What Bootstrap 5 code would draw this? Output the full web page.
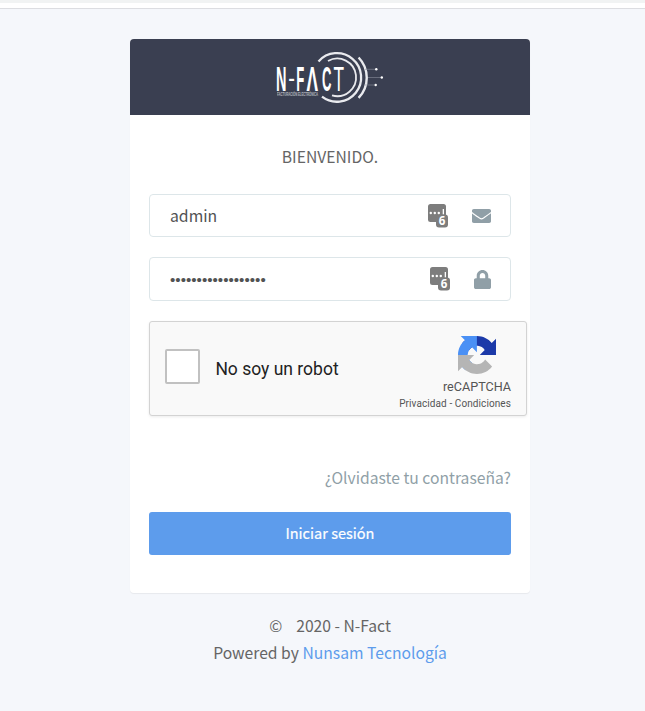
<!DOCTYPE html>
<html lang="es">
<head>
    <meta charset="UTF-8">
    <meta name="viewport" content="width=device-width, initial-scale=1.0">
    <title>N-Fact</title>
    <link href="https://cdn.jsdelivr.net/npm/bootstrap@5.3.0/dist/css/bootstrap.min.css" rel="stylesheet">
    <style>
        body {
            background: #f5f7fb;
            color: #656565;
            font-family: "Noto Sans CJK SC", "Open Sans", sans-serif;
            font-size: 15.68px;
            line-height: 27px;
        }
        .top-strip { height: 9px; background: #fff; border-top: 3px solid #f1f3f3; border-bottom: 1px solid #dcdde1; }
        .login-box { width: 400px; margin-left: 130px; margin-top: 30px; }
        .login-card { height: 554px; border-radius: 4px; overflow: hidden; box-shadow: 0 1px 1px rgba(0, 0, 0, .06); }
        .login-head { height: 76px; background: #3a3f51; }
        .login-head svg { width: 112px; height: 56px; margin-left: 2px; margin-top: 1px; }
        .login-body { padding: 28px 19px 0; }
        .welcome { margin-bottom: 24px; }
        .field { height: 43px; border: 1px solid #dde6e9; border-radius: 4px; padding-left: 20px; padding-right: 19px; }
        .field input { color: #515253; padding: 0; font-size: 15.75px; height: 40px; }
        .field-pass { height: 44px; margin-top: 20px; padding-right: 19px; }
        .field-pass input { font-family: "Liberation Sans", sans-serif; font-size: 15.2px; }
        .manager { width: 20px; height: 24px; margin-right: 24px; }
        .captcha { width: 378px; height: 95px; margin-top: 20px; padding-left: 15px; padding-right: 15px;
            background: #f9f9f9; border: 1px solid #d3d3d3; border-radius: 3px; box-shadow: 0 1px 3px rgba(0, 0, 0, .08);
            font-family: Roboto, sans-serif; }
        .captcha-check { width: 35px; height: 35px; border: 2px solid #c1c1c1; border-radius: 2px; background: #fff; margin-right: 15px; margin-bottom: 4px; }
        .captcha-label { font-size: 17.5px; color: #222; padding-top: 2px; padding-left: .4px; }
        .captcha-logo { width: 38px; height: 38px; margin-top: 14px; margin-right: 15px; }
        .captcha-name { font-size: 12.6px; line-height: 14px; color: #555; margin-top: 6px; }
        .captcha-links { font-size: 10px; letter-spacing: .09px; line-height: 12px; color: #555; margin-top: 4px; white-space: pre; }
        .forgot { color: #909fa7; margin-top: 48px; }
        .btn-login { height: 43px; margin-top: 21px; background: #5d9cec; color: #fff; border: 0; border-radius: 3px; font-size: 14.55px; font-weight: 400; padding: 0 0 2px; -webkit-text-stroke: .2px #fff; }
        .foot { margin-top: 19px; }
        .foot span { margin-right: 14px; }
        .foot a { color: #5d9cec; }
    </style>
</head>
<body>
<div class="top-strip"></div>
<div class="login-box">
    <div class="login-card bg-white">
        <div class="login-head d-flex justify-content-center align-items-center">
            <svg viewBox="275 50 112 56" role="img" aria-label="N-FACT">
                <g fill="none" stroke="#e9eaee">
                    <path d="M318.5 61.5A24.3 24.3 0 1 1 322 96.7" stroke-width="2.3"/>
                    <path d="M328 61A18.8 18.8 0 1 1 332 95.4" stroke-width="1.8"/>
                    <path d="M358.6 57.5A29 29 0 0 1 358.6 97.8" stroke-width="2.4"/>
                    <path d="M365 69.3H376M368 77.5H381M365 85H375" stroke="#8a8d9c" stroke-width=".6"/>
                </g>
                <g fill="#fff">
                    <circle cx="376.3" cy="69.3" r="1.2"/>
                    <circle cx="381.8" cy="77.5" r="1.2"/>
                    <circle cx="375.7" cy="85" r="1.2"/>
                    <g font-family="Liberation Sans" font-weight="700" font-size="34.5">
                        <text transform="translate(276 90.7) scale(.42 1)">N</text>
                        <text transform="translate(288.2 87) scale(.58 .8)" font-weight="400">-</text>
                        <text transform="translate(296.2 90.7) scale(.38 1)">F</text>
                        <text transform="translate(306.4 90.7) scale(.5 1)">Λ</text>
                        <text transform="translate(322 90.7) scale(.38 1)">C</text>
                        <text transform="translate(333.4 90.7) scale(.5 1)" font-weight="400">T</text>
                    </g>
                    <text x="277" y="96.4" font-family="Liberation Sans" font-weight="700" font-size="4.6" textLength="41" lengthAdjust="spacingAndGlyphs" opacity=".6">FACTURACIÓN ELECTRÓNICA</text>
                </g>
            </svg>
        </div>
        <form class="login-body">
            <p class="welcome text-center">BIENVENIDO.</p>
            <div class="field d-flex align-items-center">
                <input type="text" class="form-control border-0 shadow-none bg-transparent" value="admin">
                <svg class="manager flex-shrink-0" viewBox="0 0 20 24">
                    <rect width="18" height="18" rx="2.5" fill="#7d7d7d"/>
                    <rect x="8" y="10.5" width="12" height="13" rx="3" fill="#7d7d7d"/>
                    <g fill="#fff"><circle cx="2.8" cy="9" r="1.2"/><circle cx="6.8" cy="9" r="1.2"/><circle cx="10.8" cy="9" r="1.2"/><rect x="14.7" y="5" width="1.3" height="5.3"/></g>
                    <text x="14" y="21.3" text-anchor="middle" font-family="Open Sans" font-weight="700" font-size="11.5" fill="#fff">6</text>
                </svg>
                <svg class="flex-shrink-0" width="19" height="14" viewBox="0 64 512 384" preserveAspectRatio="none" fill="#909fa7"><path d="M502.3 190.8c3.9-3.1 9.7-.2 9.7 4.7V400c0 26.5-21.5 48-48 48H48c-26.5 0-48-21.5-48-48V195.6c0-5 5.7-7.8 9.7-4.7 22.4 17.4 52.1 39.5 154.1 113.6 21.1 15.4 56.7 47.8 92.2 47.6 35.7.3 72-32.8 92.3-47.6 102-74.1 131.6-96.3 154-113.7zM256 320c23.2.4 56.6-29.2 73.4-41.4 132.7-96.3 142.8-104.7 173.4-128.7 5.8-4.5 9.2-11.5 9.2-18.9v-19c0-26.5-21.5-48-48-48H48c-26.5 0-48 21.5-48 48v19c0 7.4 3.4 14.3 9.2 18.9 30.6 23.9 40.7 32.4 173.4 128.7 16.8 12.2 50.2 41.8 73.4 41.4z"/></svg>
            </div>
            <div class="field field-pass d-flex align-items-center">
                <input type="password" class="form-control border-0 shadow-none bg-transparent" value="123456789012345678">
                <svg class="manager flex-shrink-0" viewBox="0 0 20 24">
                    <rect width="18" height="18" rx="2.5" fill="#7d7d7d"/>
                    <rect x="8" y="10.5" width="12" height="13" rx="3" fill="#7d7d7d"/>
                    <g fill="#fff"><circle cx="2.8" cy="9" r="1.2"/><circle cx="6.8" cy="9" r="1.2"/><circle cx="10.8" cy="9" r="1.2"/><rect x="14.7" y="5" width="1.3" height="5.3"/></g>
                    <text x="14" y="21.3" text-anchor="middle" font-family="Open Sans" font-weight="700" font-size="11.5" fill="#fff">6</text>
                </svg>
                <svg class="flex-shrink-0" width="17" height="19" viewBox="0 0 448 512" preserveAspectRatio="none" fill="#909fa7"><path d="M400 224h-24v-72C376 68.2 307.8 0 224 0S72 68.2 72 152v72H48c-26.5 0-48 21.5-48 48v192c0 26.5 21.5 48 48 48h352c26.5 0 48-21.5 48-48V272c0-26.5-21.5-48-48-48zm-104 0H152v-72c0-39.7 32.3-72 72-72s72 32.3 72 72v72z"/></svg>
            </div>
            <div class="captcha d-flex">
                <div class="captcha-check align-self-center flex-shrink-0"></div>
                <div class="captcha-label align-self-center">No soy un robot</div>
                <div class="ms-auto d-flex flex-column align-items-end">
                    <svg class="captcha-logo" viewBox="0 0 64 64">
                        <path fill="#1c3aa9" d="M64 31.955l-.033-1.37V4.687l-7.16 7.16C50.948 4.674 42.033.093 32.05.093c-10.4 0-19.622 4.96-25.458 12.64l11.736 11.86a15.55 15.55 0 0 1 4.754-5.334c2.05-1.6 4.952-2.906 8.968-2.906.485 0 .86.057 1.135.163 4.976.393 9.288 3.14 11.828 7.124l-8.307 8.307L64 31.953"/>
                        <path fill="#4a90f5" d="M31.862.094l-1.37.033H4.594l7.16 7.16C4.58 13.147 0 22.06 0 32.046c0 10.4 4.96 19.622 12.64 25.458L24.5 45.768a15.55 15.55 0 0 1-5.334-4.754c-1.6-2.05-2.906-4.952-2.906-8.968 0-.485.057-.86.163-1.135.393-4.976 3.14-9.288 7.124-11.828l8.307 8.307L31.86.095"/>
                        <path fill="#b5b5b5" d="M.001 32.045l.033 1.37v25.898l7.16-7.16c5.86 7.173 14.774 11.754 24.76 11.754 10.4 0 19.622-4.96 25.458-12.64l-11.736-11.86a15.55 15.55 0 0 1-4.754 5.334c-2.05 1.6-4.952 2.906-8.968 2.906-.485 0-.86-.057-1.135-.163-4.976-.393-9.288-3.14-11.828-7.124l8.307-8.307c-10.522.04-22.4.066-27.295-.005"/>
                    </svg>
                    <div class="captcha-name">reCAPTCHA</div>
                    <div class="captcha-links">Privacidad - Condiciones</div>
                </div>
            </div>
            <div class="forgot text-end">¿Olvidaste tu contraseña?</div>
            <button type="button" class="btn btn-login w-100">Iniciar sesión</button>
        </form>
    </div>
    <div class="foot text-center">
        <div><span>©</span>2020 - N-Fact</div>
        <div>Powered by <a href="#" class="text-decoration-none">Nunsam Tecnología</a></div>
    </div>
</div>
<script src="https://cdn.jsdelivr.net/npm/bootstrap@5.3.0/dist/js/bootstrap.bundle.min.js"></script>
</body>
</html>
